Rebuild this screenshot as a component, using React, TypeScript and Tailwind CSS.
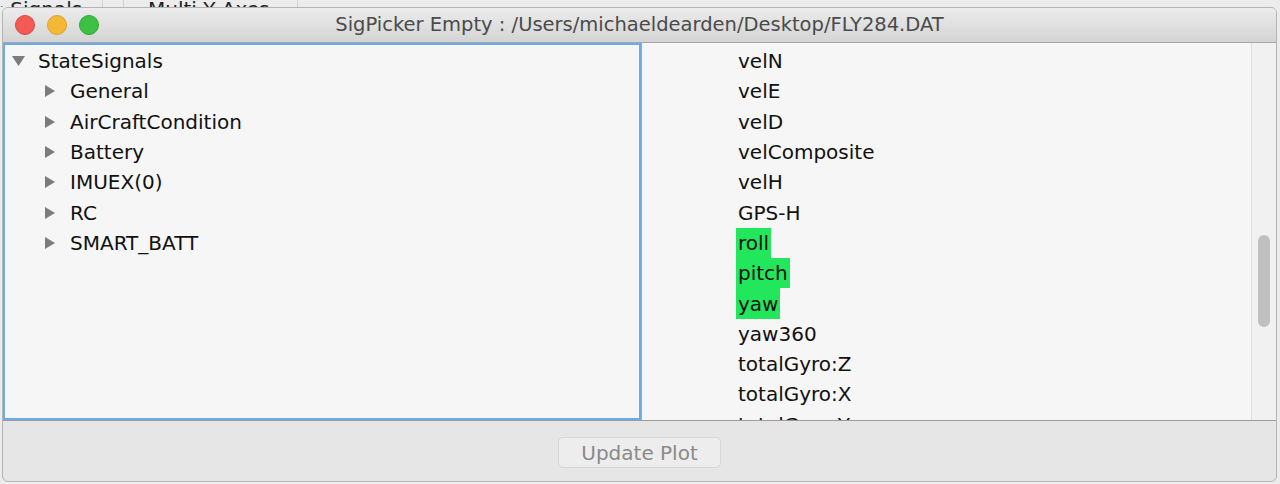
import type { FC } from "react";

const treeChildren = ["General", "AirCraftCondition", "Battery", "IMUEX(0)", "RC", "SMART_BATT"];

const signals: { name: string; selected?: boolean }[] = [
  { name: "velN" },
  { name: "velE" },
  { name: "velD" },
  { name: "velComposite" },
  { name: "velH" },
  { name: "GPS-H" },
  { name: "roll", selected: true },
  { name: "pitch", selected: true },
  { name: "yaw", selected: true },
  { name: "yaw360" },
  { name: "totalGyro:Z" },
  { name: "totalGyro:X" },
  { name: "totalGyro:Y" },
];

const DownArrow: FC = () => (
  <svg width="13" height="10" viewBox="0 0 13 10">
    <polygon points="0,0 13,0 6.5,10" fill="#7c7c7c" />
  </svg>
);

const RightArrow: FC = () => (
  <svg width="10" height="12" viewBox="0 0 10 12">
    <polygon points="0,0 10,6 0,12" fill="#7c7c7c" />
  </svg>
);

const App: FC = () => {
  return (
    <div className="w-[1280px] h-[484px] overflow-hidden bg-[#ececec] font-['DejaVu_Sans',sans-serif] text-[#111]">
      {/* window behind, peeking out at the top */}
      <div className="h-[7px] overflow-hidden flex text-[20px] leading-none text-[#222]">
        <div className="w-[107px] -ml-[4px] -mt-[1px] border-r border-[#cfcfcf] whitespace-nowrap">&lsaquo; Signals</div>
        <div className="w-[21px] border-r border-[#cfcfcf]" />
        <div className="w-[174px] pl-[24px] -mt-[1px] border-r border-[#cfcfcf] whitespace-nowrap">Multi Y Axes</div>
      </div>

      <div className="ml-[2px] w-[1275px] h-[475px] flex flex-col rounded-[6px] border border-[#b4b4b4] overflow-hidden bg-[#e6e6e6]">
        {/* title bar */}
        <div className="h-[35px] shrink-0 relative flex items-center justify-center bg-gradient-to-b from-[#ececec] to-[#d4d4d4] border-b border-[#a6a6a6]">
          <div className="absolute left-[12px] top-[7px] flex gap-[12px]">
            <span className="w-[20px] h-[20px] rounded-full bg-[#f25b55] border border-[#e0443e]" />
            <span className="w-[20px] h-[20px] rounded-full bg-[#f5b836] border border-[#dea123]" />
            <span className="w-[20px] h-[20px] rounded-full bg-[#3fc044] border border-[#2aa830]" />
          </div>
          <span className="text-[19.5px] text-[#4b4b4b] whitespace-nowrap">
            SigPicker Empty : /Users/michaeldearden/Desktop/FLY284.DAT
          </span>
        </div>

        {/* split content */}
        <div className="h-[378px] shrink-0 flex border-b border-[#9c9c9c]">
          <div className="w-[638px] h-full border-2 border-[#68adea] bg-[#f6f6f6] pt-[1px] text-[20px]">
            <div className="h-[30.3px] flex items-center">
              <div className="w-[33px] pl-[7px] flex items-center">
                <DownArrow />
              </div>
              <span>StateSignals</span>
            </div>
            {treeChildren.map((name) => (
              <div key={name} className="h-[30.3px] flex items-center">
                <div className="w-[65px] pl-[40px] flex items-center">
                  <RightArrow />
                </div>
                <span>{name}</span>
              </div>
            ))}
          </div>

          <div className="flex-1 h-full flex border-l border-[#a8a8a8] bg-[#f6f6f6]">
            <div className="flex-1 overflow-hidden pt-[3px] pl-[94px] text-[20px]">
              {signals.map((s) => (
                <div key={s.name} className="h-[30.3px] flex items-center">
                  <span
                    className={`h-full flex items-center px-[2px] ${s.selected ? "bg-[#22e65c]" : ""}`}
                  >
                    {s.name}
                  </span>
                </div>
              ))}
            </div>
            <div className="w-[25px] h-full bg-[#f1f1f1] border-l border-[#dfdfdf] flex justify-center">
              <div className="mt-[192px] w-[12px] h-[92px] rounded-full bg-[#c0c0c0]" />
            </div>
          </div>
        </div>

        {/* bottom button bar */}
        <div className="flex-1 flex justify-center pt-[16px]">
          <button
            disabled
            className="w-[163px] h-[31px] rounded-[5px] border border-[#d6d6d6] bg-[#ededed] text-[20px] text-[#8a8a8a] font-['DejaVu_Sans',sans-serif]"
          >
            Update Plot
          </button>
        </div>
      </div>
    </div>
  );
};

export default App;
